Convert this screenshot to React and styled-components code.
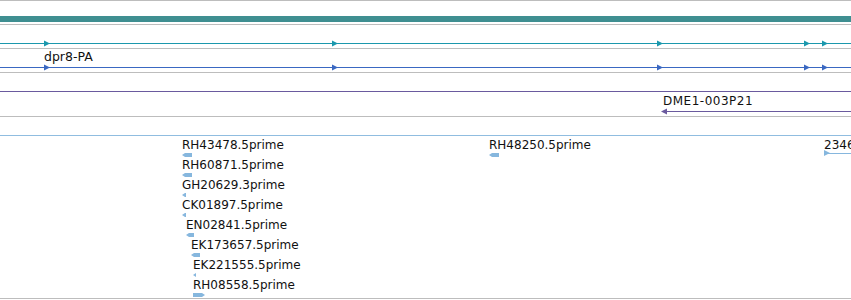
import React from 'react';
import styled, { createGlobalStyle } from 'styled-components';

const GlobalStyle = createGlobalStyle`
  html, body {
    margin: 0;
    padding: 0;
    background: #ffffff;
  }
  body {
    font-family: 'DejaVu Sans', Verdana, sans-serif;
  }
`;

const Browser = styled.div`
  width: 851px;
  height: 300px;
  overflow: hidden;
  background: #fff;
  border-top: 1px solid #bdbdbd;
  box-sizing: border-box;
  display: flex;
  flex-direction: column;
`;

const Track = styled.div`
  position: relative;
  flex: none;
  height: ${(p) => p.$h}px;
  border-bottom: 1px solid ${(p) => p.$border || '#bdbdbd'};
`;

const Bar = styled.div`
  position: absolute;
  left: 0;
  right: 0;
  top: ${(p) => p.$top}px;
  height: ${(p) => p.$h || 1}px;
  background: ${(p) => p.$color};
`;

const Line = styled.div`
  position: absolute;
  left: ${(p) => p.$left || 0}px;
  right: 0;
  top: ${(p) => p.$top}px;
  height: 1px;
  background: ${(p) => p.$color};
`;

const Label = styled.div`
  position: absolute;
  left: ${(p) => p.$x}px;
  top: ${(p) => p.$y}px;
  font-size: ${(p) => p.$size || 12}px;
  line-height: 14px;
  color: #111;
  letter-spacing: ${(p) => p.$ls || 0}px;
  white-space: nowrap;
`;

const Glyph = styled.svg`
  position: absolute;
  left: ${(p) => p.$x}px;
  top: ${(p) => p.$y}px;
  overflow: visible;
`;

/* stacked reads in the lower track: one row per read, indented by its start */
const ReadStack = styled.div`
  position: absolute;
  left: ${(p) => p.$x}px;
  top: 2px;
  display: flex;
  flex-direction: column;
`;

const ReadRow = styled.div`
  height: 20px;
  margin-left: ${(p) => p.$indent || 0}px;
  display: flex;
  flex-direction: column;
  gap: 1px;
`;

const ReadName = styled.span`
  font-size: 12px;
  line-height: 14px;
  color: #111;
  white-space: nowrap;
`;

const ReadShape = styled.svg`
  display: block;
  flex: none;
`;

const Arrow = ({ x, y, color, left }) => (
  <Glyph $x={x} $y={y - 3} width="6" height="7" viewBox="0 0 6 7">
    {left ? (
      <polygon points="6,0.5 6,6.5 0,3.5" fill={color} />
    ) : (
      <polygon points="0,0.5 0,6.5 6,3.5" fill={color} />
    )}
  </Glyph>
);

const ReadGlyph = ({ w, right }) => (
  <ReadShape width={w} height="4" viewBox={`0 0 ${w} 4`}>
    {right ? (
      <polygon points={`0,0 ${w - 3},0 ${w},2 ${w - 3},4 0,4`} fill="#86b7de" />
    ) : (
      <polygon points={`0,2 3,0 ${w},0 ${w},4 3,4`} fill="#86b7de" />
    )}
  </ReadShape>
);

const exonsX = [44, 332, 657, 804, 822];

const stack = [
  { name: 'RH43478.5prime', x: 182, w: 10 },
  { name: 'RH60871.5prime', x: 182, w: 10 },
  { name: 'GH20629.3prime', x: 182, w: 4 },
  { name: 'CK01897.5prime', x: 182, w: 4 },
  { name: 'EN02841.5prime', x: 186, w: 8 },
  { name: 'EK173657.5prime', x: 191, w: 9 },
  { name: 'EK221555.5prime', x: 193, w: 3 },
  { name: 'RH08558.5prime', x: 193, w: 12, right: true },
];

function ReadColumn({ x, reads }) {
  return (
    <ReadStack $x={x}>
      {reads.map((r) => (
        <ReadRow key={r.name} $indent={r.x - x}>
          <ReadName>{r.name}</ReadName>
          <ReadGlyph w={r.w} right={r.right} />
        </ReadRow>
      ))}
    </ReadStack>
  );
}

export default function App() {
  return (
    <>
      <GlobalStyle />
      <Browser>
        <Track $h={23}>
          <Bar $top={15} $h={6} $color="#3f8f91" />
        </Track>
        <Track $h={23}>
          <Line $top={18} $color="#1b98ad" />
          {exonsX.map((x) => (
            <Arrow key={x} x={x} y={18} color="#1b98ad" />
          ))}
        </Track>
        <Track $h={23}>
          <Label $x={44} $y={1} $size={12.5}>dpr8-PA</Label>
          <Line $top={18} $color="#3a68c2" />
          {exonsX.map((x) => (
            <Arrow key={x} x={x} y={18} color="#3a68c2" />
          ))}
        </Track>
        <Track $h={43}>
          <Line $top={18} $color="#6a5a9e" />
          <Label $x={663} $y={21} $ls={0.5}>DME1-003P21</Label>
          <Line $left={664} $top={38} $color="#6a5a9e" />
          <Arrow x={661} y={38} color="#6a5a9e" left />
        </Track>
        <Track $h={18} $border="#90bde0" />
        <Track $h={162}>
          <ReadColumn x={182} reads={stack} />
          <ReadColumn x={489} reads={[{ name: 'RH48250.5prime', x: 489, w: 10 }]} />
          <Label $x={824} $y={2}>2346</Label>
          <Line $left={824} $top={17} $color="#86b7de" />
          <Glyph $x={824} $y={14} width="6" height="6" viewBox="0 0 6 6">
            <polygon points="0,0 6,3 0,6" fill="#86b7de" />
          </Glyph>
        </Track>
      </Browser>
    </>
  );
}
